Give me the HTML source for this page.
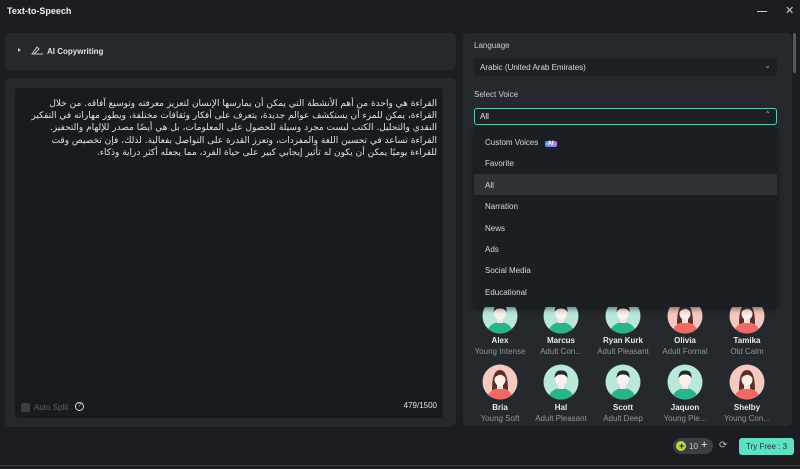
<!DOCTYPE html>
<html><head><meta charset="utf-8"><style>
*{margin:0;padding:0;box-sizing:border-box}
body{width:800px;height:469px;background:#1b1d21;font-family:"Liberation Sans",sans-serif;color:#e6e8ea;position:relative;overflow:hidden;font-size:8px}
.abs{position:absolute}
.panel{position:absolute;background:#25282d;border-radius:5px}
.ar{font-family:"DejaVu Sans","Noto Sans CJK SC",sans-serif;direction:rtl;text-align:right;font-size:9px;line-height:12.2px;color:#dfe1e3}
.dd div.it{position:absolute;left:11px;font-size:8px;color:#d7d9dc}
.av{position:absolute;width:36px;height:36px}
.nm{position:absolute;width:70px;text-align:center;font-size:8px;font-weight:bold;color:#e8eaec}
.sb{position:absolute;width:70px;text-align:center;font-size:8px;color:#8f959c;white-space:nowrap}
</style></head><body>
<div class="abs" style="left:7px;top:6px;font-size:9px;font-weight:bold;color:#f0f0f0">Text-to-Speech</div>
<div class="abs" style="left:757px;top:11px;width:10px;height:1px;background:#ccc"></div>
<div class="abs" style="left:785px;top:4px;font-size:11px;color:#ccc">✕</div>
<div class="abs" style="left:0;top:27px;width:800px;height:1px;background:#202328"></div>

<div class="panel" style="left:5px;top:33px;width:451px;height:37px">
  <div class="abs" style="left:13px;top:15px;width:0;height:0;border-left:3px solid #bbb;border-top:2px solid transparent;border-bottom:2px solid transparent"></div>
  <svg class="abs" style="left:26px;top:12px" width="14" height="10" viewBox="0 0 14 10"><path d="M1 9 L6 2 L8 4 L3 9 Z M1 9 H12" fill="none" stroke="#ccc" stroke-width="1"/></svg>
  <div class="abs" style="left:42px;top:14px;font-size:8px;color:#e0e2e4;font-weight:bold">AI Copywriting</div>
</div>

<div class="panel" style="left:5px;top:78px;width:451px;height:349px">
  <div class="abs" style="left:10px;top:10px;width:428px;height:330px;background:#181b20;border-radius:3px">
    <div class="ar abs" style="left:8px;top:10px;width:414px">القراءة هي واحدة من أهم الأنشطة التي يمكن أن يمارسها الإنسان لتعزيز معرفته وتوسيع آفاقه. من خلال القراءة، يمكن للمرء أن يستكشف عوالم جديدة، يتعرف على أفكار وثقافات مختلفة، ويطور مهاراته في التفكير النقدي والتحليل. الكتب ليست مجرد وسيلة للحصول على المعلومات، بل هي أيضًا مصدر للإلهام والتحفيز. القراءة تساعد في تحسين اللغة والمفردات، وتعزز القدرة على التواصل بفعالية. لذلك، فإن تخصيص وقت للقراءة يوميًا يمكن أن يكون له تأثير إيجابي كبير على حياة الفرد، مما يجعله أكثر دراية وذكاء.</div>
    <div class="abs" style="left:6px;top:315px;width:9px;height:9px;background:#3a3d42;border-radius:2px"></div>
    <div class="abs" style="left:19px;top:315px;font-size:8px;color:#5d6167">Auto Split</div>
    <div class="abs" style="left:60px;top:314px;width:9px;height:9px;border:1px solid #ddd;border-radius:50%;font-size:6px;text-align:center;line-height:7px;color:#ddd">?</div>
    <div class="abs" style="right:6px;top:313px;font-size:8px;color:#e0e2e4">479/1500</div>
  </div>
</div>

<div class="panel" style="left:463px;top:33px;width:329px;height:393px">
  <div class="abs" style="left:11px;top:8px;font-size:8px;color:#c9ccd0">Language</div>
  <div class="abs" style="left:11px;top:25px;width:303px;height:18px;background:#1d2024;border-radius:3px">
    <div class="abs" style="left:6px;top:5px;font-size:8px;color:#d8dadd">Arabic (United Arab Emirates)</div>
    <div class="abs" style="right:6px;top:3px;font-size:8px;color:#aaa">⌄</div>
  </div>
  <div class="abs" style="left:11px;top:57px;font-size:8px;color:#c9ccd0">Select Voice</div>
  <div class="abs" style="left:11px;top:75px;width:303px;height:17px;background:#1d2024;border:1px solid #5fc8b4;border-radius:3px">
    <div class="abs" style="left:5px;top:3px;font-size:8px;color:#e6e8ea">All</div>
    <div class="abs" style="right:5px;top:1px;font-size:8px;color:#aaa">⌃</div>
  </div>
</div>
<div class="abs" style="left:793px;top:33px;width:3px;height:40px;background:#55585d;border-radius:2px"></div>

<svg width="0" height="0" style="position:absolute"><defs>
<clipPath id="c"><circle cx="18" cy="18" r="17.5"/></clipPath>
<g id="m"><circle cx="18" cy="18" r="17.5" fill="#b9e7dc"/><g clip-path="url(#c)"><path d="M5 36 Q6 25 18 24 Q30 25 31 36Z" fill="#2bb48c"/><rect x="15" y="19" width="6" height="6" fill="#f3e7e1"/><ellipse cx="18" cy="15" rx="6" ry="7" fill="#fbf1ec"/><path d="M11.5 14 Q12 6 18 6.5 Q25 6 24.5 14 Q22 10 18 10.5 Q14 10 11.5 14Z" fill="#1f2a2e"/></g></g>
<g id="f"><circle cx="18" cy="18" r="17.5" fill="#f6c8c2"/><g clip-path="url(#c)"><path d="M10 26 Q10 6 18 6 Q26 6 26 26Z" fill="#5a2e24"/><path d="M5 36 Q6 25 18 24 Q30 25 31 36Z" fill="#ee6a67"/><rect x="15" y="19" width="6" height="6" fill="#f3e0d8"/><ellipse cx="18" cy="15.5" rx="5.5" ry="6.5" fill="#fbeee8"/><path d="M12.5 14 Q13 8 18 8.5 Q23 8 23.5 14 Q20 10 17 11 Q14 12 12.5 14Z" fill="#5a2e24"/></g></g>
</defs></svg>

<svg class="av" style="left:482px;top:298px" viewBox="0 0 36 36"><use href="#m"/></svg>
<svg class="av" style="left:543px;top:298px" viewBox="0 0 36 36"><use href="#m"/></svg>
<svg class="av" style="left:605px;top:298px" viewBox="0 0 36 36"><use href="#m"/></svg>
<svg class="av" style="left:667px;top:298px" viewBox="0 0 36 36"><use href="#f"/></svg>
<svg class="av" style="left:729px;top:298px" viewBox="0 0 36 36"><use href="#f"/></svg>

<div class="abs dd" style="left:474px;top:127px;width:303px;height:180px;background:#1b1e22;border-radius:3px;box-shadow:0 2px 6px rgba(0,0,0,.5)">
  <div class="abs" style="left:0;top:47px;width:303px;height:21px;background:#2f3237"></div>
  <div class="it" style="top:11px">Custom Voices <span style="display:inline-block;background:linear-gradient(90deg,#3fa3ff,#c46bff);color:#fff;font-size:6px;font-weight:bold;padding:0 3px;border-radius:2px;margin-left:4px">AI</span></div>
  <div class="it" style="top:32px">Favorite</div>
  <div class="it" style="top:54px">All</div>
  <div class="it" style="top:75px">Narration</div>
  <div class="it" style="top:97px">News</div>
  <div class="it" style="top:118px">Ads</div>
  <div class="it" style="top:139px">Social Media</div>
  <div class="it" style="top:161px">Educational</div>
</div>

<svg class="av" style="left:482px;top:364px" viewBox="0 0 36 36"><use href="#f"/></svg>
<svg class="av" style="left:543px;top:364px" viewBox="0 0 36 36"><use href="#m"/></svg>
<svg class="av" style="left:605px;top:364px" viewBox="0 0 36 36"><use href="#m"/></svg>
<svg class="av" style="left:667px;top:364px" viewBox="0 0 36 36"><use href="#m"/></svg>
<svg class="av" style="left:729px;top:364px" viewBox="0 0 36 36"><use href="#f"/></svg>

<div class="nm" style="left:465px;top:336px">Alex</div><div class="sb" style="left:465px;top:347px">Young Intense</div>
<div class="nm" style="left:526px;top:336px">Marcus</div><div class="sb" style="left:526px;top:347px">Adult Con...</div>
<div class="nm" style="left:588px;top:336px">Ryan Kurk</div><div class="sb" style="left:588px;top:347px">Adult Pleasant</div>
<div class="nm" style="left:650px;top:336px">Olivia</div><div class="sb" style="left:650px;top:347px">Adult Formal</div>
<div class="nm" style="left:712px;top:336px">Tamika</div><div class="sb" style="left:712px;top:347px">Old Calm</div>

<div class="nm" style="left:465px;top:403px">Bria</div><div class="sb" style="left:465px;top:414px">Young Soft</div>
<div class="nm" style="left:526px;top:403px">Hal</div><div class="sb" style="left:526px;top:414px">Adult Pleasant</div>
<div class="nm" style="left:588px;top:403px">Scott</div><div class="sb" style="left:588px;top:414px">Adult Deep</div>
<div class="nm" style="left:650px;top:403px">Jaquon</div><div class="sb" style="left:650px;top:414px">Young Ple...</div>
<div class="nm" style="left:712px;top:403px">Shelby</div><div class="sb" style="left:712px;top:414px">Young Con...</div>

<div class="abs" style="left:673px;top:438px;width:40px;height:16px;background:#3b3f45;border-radius:8px">
  <div class="abs" style="left:3px;top:3px;width:10px;height:10px;border-radius:50%;background:#b6d94a"></div>
  <div class="abs" style="left:6px;top:3px;font-size:9px;color:#1b1d21;line-height:10px;font-weight:bold">+</div>
  <div class="abs" style="left:16px;top:4px;font-size:8px;color:#ccc">10</div>
  <div class="abs" style="left:28px;top:1px;font-size:11px;color:#eee">+</div>
</div>
<div class="abs" style="left:719px;top:440px;font-size:10px;color:#bbb">⟳</div>
<div class="abs" style="left:739px;top:438px;width:55px;height:17px;background:#5fe0c2;border-radius:3px;color:#14352d;font-size:8px;text-align:center;line-height:17px">Try Free : 3</div>
<div class="abs" style="left:0;top:465px;width:800px;height:1px;background:#3a3d42"></div>
</body></html>
